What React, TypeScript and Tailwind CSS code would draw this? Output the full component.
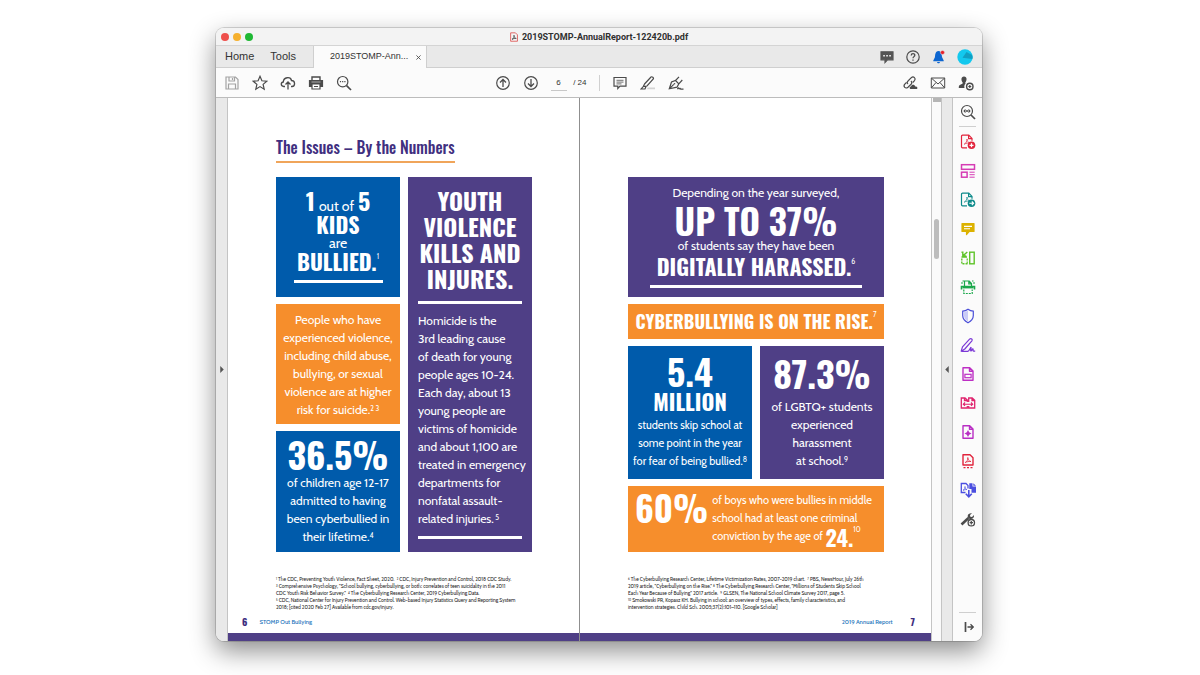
import type { ReactNode } from "react";

const display = "font-['Oswald','Roboto_Condensed','Liberation_Sans_Narrow','Liberation_Sans',sans-serif] font-bold";
const note = "whitespace-nowrap text-[5px] leading-[7px] text-[#222]";
const highSup = "-top-3 font-['Cabin',Lato,sans-serif] text-[7px] font-normal";

function Icon({ children, color = "text-[#4b4b4b]" }: { children: ReactNode; color?: string }) {
  return (
    <svg
      viewBox="0 0 16 16"
      className={`block size-4 ${color}`}
      fill="none"
      stroke="currentColor"
      strokeWidth="1.2"
      aria-hidden="true"
    >
      {children}
    </svg>
  );
}

function IconButton({ label, color, children }: { label: string; color?: string; children: ReactNode }) {
  return (
    <button type="button" aria-label={label} className="cursor-pointer">
      <Icon color={color}>{children}</Icon>
    </button>
  );
}

const swoosh = "M4.2 10.2c1.8-1 2.9-3 2.8-5.2 0 2 1.2 3.600 3 4.100-2-.3-4 .1-5.800 1.100z";

const tools = [
  {
    label: "Create PDF",
    color: "text-[#e1243c]",
    icon: (
      <>
        <path d="M7 13.800H2.500a1 1 0 0 1-1-1V2.200a1 1 0 0 1 1-1h6.300l3.200 3.200v2.400M8.600 1.400v3.200h3.200" />
        <path d={swoosh} strokeWidth=".7" />
        <circle cx="11.500" cy="11.300" r="3.800" fill="currentColor" stroke="none" />
        <path d="M11.500 9.300v4M9.500 11.300h4" stroke="#fff" strokeWidth="1.300" />
      </>
    ),
  },
  {
    label: "Organize Pages",
    color: "text-[#d63cb4]",
    icon: (
      <>
        <rect x="1.500" y="1.700" width="13" height="4.600" strokeWidth="1.500" />
        <rect x="1.500" y="9.200" width="5.600" height="5" strokeWidth="1.500" />
        <path d="M9.500 9.200h5.200M9.500 11.700h5.200M9.500 14.200h5.200" strokeWidth="1" />
      </>
    ),
  },
  {
    label: "Export PDF",
    color: "text-[#0d8a8a]",
    icon: (
      <>
        <path d="M7 13.800H2.500a1 1 0 0 1-1-1V2.200a1 1 0 0 1 1-1h6.300l3.200 3.200v2.400M8.600 1.400v3.200h3.200" />
        <path d={swoosh} strokeWidth=".7" />
        <circle cx="11.500" cy="11.300" r="3.800" fill="currentColor" stroke="none" />
        <path d="M9.300 11.300h4M11.800 9.500l1.800 1.800-1.800 1.800" stroke="#fff" strokeWidth="1.100" />
      </>
    ),
  },
  {
    label: "Comment",
    color: "text-[#dcb200]",
    icon: (
      <>
        <path d="M2 2.500h12v8H9.200L6.500 13.500v-3H2z" fill="currentColor" strokeLinejoin="round" />
        <path d="M4 5.400h8M4 7.800h6" stroke="#fff" strokeWidth="1.100" />
      </>
    ),
  },
  {
    label: "Crop Pages",
    color: "text-[#5fc42a]",
    icon: (
      <>
        <rect x="9.700" y="2.200" width="4.500" height="11.600" strokeWidth="1.400" />
        <path d="M7.500 13.800H1.800V8.500" strokeWidth="1.400" strokeDasharray="2 1" />
        <path d="M7.200 13.500V8.500" strokeDasharray="2 1" />
        <path d="M1.500 2.200h2M1.500 7H7M2.800 3v3h3.500M3 5.800L7.300 2" strokeWidth="1.400" />
      </>
    ),
  },
  {
    label: "Scan & OCR",
    color: "text-[#19a84a]",
    icon: (
      <>
        <path d="M4.500 7V2h4.700L11.500 4.500V7M8.800 2v2.800h2.700" />
        <path d="M1.500 10.500V7.500h13v3" strokeWidth="1.600" />
        <path d="M2.500 8.700h11" strokeWidth="1.400" />
        <path d="M3.800 10.500v4h8.400v-4" strokeDasharray="2 1" />
        <path d="M2 5V3M14 5V3M2.500 2h1.500M12 2h1.500" strokeWidth="1" />
      </>
    ),
  },
  {
    label: "Protect",
    color: "text-[#4b4fd8]",
    icon: (
      <>
        <path d="M8 1.300c1.700 1.200 3.500 1.800 5.300 1.900v4.300c0 3.200-2.200 5.600-5.300 7.200-3.100-1.600-5.300-4-5.300-7.200V3.200C4.500 3.100 6.300 2.500 8 1.300z" />
        <path d="M8 2.500v11C5.500 12 4 10 4 7.500V4.200C5.500 4 7 3.300 8 2.500z" fill="#c9cbf7" stroke="none" />
      </>
    ),
  },
  {
    label: "Fill & Sign",
    color: "text-[#7b38d6]",
    icon: (
      <path
        d="M1.200 14.200l1.300-4.400L9.800 1.900c1.400-1 3.100.6 2.100 2L4.800 12l-3.600 2.200zM1.500 14.400h6.200c1.800-.2 2.100-3.200 3.100-3.900.9-.3-.8 3.500.2 3.500s1-2.200 1.800-2.200-.3 2.300.8 2.300h1.600"
        strokeLinejoin="round"
      />
    ),
  },
  {
    label: "Prepare Form",
    color: "text-[#bd2fc4]",
    icon: (
      <>
        <path d="M3 1.700h6.700L13 5v9.300H3zM9.500 2v3.200h3.300" strokeWidth="1.400" strokeLinejoin="round" />
        <rect x="4.900" y="8.300" width="6.200" height="3.400" />
      </>
    ),
  },
  {
    label: "Combine Files",
    color: "text-[#e0246e]",
    icon: (
      <>
        <path d="M7.300 7V5L5 3H1.300v10h6v-2M4.500 3v2.500h2.500M8.700 7V3h3.500l2.500 2.200V13h-6v-2M12 3v2.500h2.500" strokeWidth="1.300" />
        <path d="M3.300 9.200h9.400M5 7.500L3.300 9.200 5 10.900M11 7.500l1.700 1.700L11 10.900" strokeWidth="1.100" />
      </>
    ),
  },
  {
    label: "Optimize PDF",
    color: "text-[#b92fc4]",
    icon: (
      <>
        <path d="M3 1.700h6.700L13 5v9.300H3zM9.500 2v3.200h3.300" strokeWidth="1.400" strokeLinejoin="round" />
        <path d="M8 6l1.200 2.300L11.500 9.500l-2.300 1.200L8 13l-1.200-2.300L4.500 9.500l2.300-1.200z" fill="currentColor" stroke="none" />
      </>
    ),
  },
  {
    label: "PDF Standards",
    color: "text-[#e1243c]",
    icon: (
      <>
        <path d="M3 12V1.700h7L13 4.700V12zM3 12h10" strokeWidth="1.400" strokeLinejoin="round" />
        <path d="M5.200 9.500C7 8.500 8 7 7.800 4.500 8 7 9 8.200 11 8.500c-2-.2-4 .2-5.800 1z" strokeWidth=".8" />
        <path d="M3.500 14.700h2M7 14.700h2M10.500 14.700h2" />
      </>
    ),
  },
  {
    label: "Send for Review",
    color: "text-[#4b4fe0]",
    icon: (
      <>
        <path d="M5.500 10.500H1.300V1.500H6L8 3.500v3" strokeWidth="1.300" />
        <path d="M3 8.300C4.500 7.500 5 6.500 5 4.500c0 1.500.7 2.800 2 3-1.500 0-2.700.3-4 .8z" strokeWidth=".7" />
        <path d="M9.300 1.200h3.200v3.300H16v6.300h-4.500V7H9.300z" fill="currentColor" stroke="none" />
        <path d="M13.300 1.200L16 3.700h-2.700z" fill="currentColor" stroke="none" />
        <path d="M8.800 8v6.500M5.800 11.800l3 3 3-3" strokeWidth="1.600" />
      </>
    ),
  },
  {
    label: "More Tools",
    color: "text-[#4b4b4b]",
    icon: (
      <>
        <path d="M1.500 13.500L8.500 7" strokeWidth="2.600" />
        <path d="M12 2.200L10 4l.3 1.800 1.700.3 2-2c.5 3-2.300 4.700-4.700 3.700C6.500 6 7.500 1.500 12 2.200z" fill="currentColor" stroke="none" />
        <circle cx="11.300" cy="11.700" r="3.200" fill="#fff" strokeWidth="1.300" />
        <path d="M11.300 10v3.400M9.600 11.700H13" />
      </>
    ),
  },
];

function TitleBar() {
  return (
    <header className="flex h-[17px] items-center bg-[#f3f3f3] px-[5px]">
      <div className="flex flex-1 gap-1">
        <button type="button" aria-label="Close window" className="size-2 rounded-full bg-[#ee4f4b]" />
        <button type="button" aria-label="Minimize window" className="size-2 rounded-full bg-[#f5b02e]" />
        <button type="button" aria-label="Zoom window" className="size-2 rounded-full bg-[#1fb834]" />
      </div>
      <h1 className="flex items-center gap-1 font-[Roboto,sans-serif] text-[9px] leading-3 font-bold text-[#303030]">
        <svg viewBox="0 0 10 12" className="h-[10px] w-2 text-[#dc4a48]" fill="none" stroke="currentColor" aria-hidden="true">
          <path d="M.8.800h6l2.500 2.500v8H.8z" />
          <path d="M2.500 9C4.500 8 5.200 6 5 3.800 5 6 6 7.500 7.800 7.800 6 7.500 4 8 2.500 9z" stroke="#444" />
        </svg>
        2019STOMP-AnnualReport-122420b.pdf
      </h1>
      <div className="flex-1" />
    </header>
  );
}

function TabBar() {
  return (
    <nav className="flex h-[23px] items-stretch border-t border-[#d4d4d4] bg-[#e9e9e9] text-[11px] text-[#333]">
      <div className="flex w-[98px] items-center gap-4 border-r border-b border-[#cfcfcf] pl-[9px]">
        <button type="button">Home</button>
        <button type="button">Tools</button>
      </div>
      <div className="flex items-center gap-2 bg-[#fbfbfb] pr-[5px] pl-4 text-[9px]">
        <button type="button">2019STOMP-Ann...</button>
        <button type="button" aria-label="Close tab">
          <svg viewBox="0 0 6 6" className="size-[5px]" stroke="#444" aria-hidden="true">
            <path d="M.5.500l5 5M5.500.500l-5 5" />
          </svg>
        </button>
      </div>
      <div className="flex flex-1 items-center justify-end gap-[10px] border-b border-l border-[#cfcfcf] pr-[9px]">
        <IconButton label="Messages" color="text-[#555]">
          <path d="M2 2.800h12v8H8.500L6 13.500v-2.700H2z" fill="currentColor" />
          <path d="M4.300 6.800h1.500M7.300 6.800h1.500M10.300 6.800h1.500" stroke="#fff" strokeWidth="1.500" />
        </IconButton>
        <IconButton label="Help">
          <circle cx="8" cy="8" r="6.200" />
          <path d="M6.200 6.500c.1-2.500 3.700-2.300 3.600-.2C9.800 7.600 8 7.700 8 9.300M8 10.500v1.300" strokeWidth="1.300" />
        </IconButton>
        <IconButton label="Notifications" color="text-[#0d66d0]">
          <path d="M7.500 2C4 2.300 4.300 6 3.900 8.300L2.300 11.500v.7h10.400v-.7l-1.600-3.200C10.700 6 11 2.300 7.500 2z" fill="currentColor" stroke="none" />
          <path d="M6 13h3c-.2 1.800-2.800 1.800-3 0z" fill="currentColor" stroke="none" />
          <circle cx="11.500" cy="3.500" r="2.100" fill="#e8232c" stroke="#e9e9e9" strokeWidth=".5" />
        </IconButton>
        <IconButton label="Account">
          <circle cx="8" cy="8" r="7.700" fill="#13c8ee" stroke="none" />
          <path d="M9.500 3L15 6c.8 1.500.7 3 .3 4L5.500 8.800z" fill="#119fc2" stroke="none" />
        </IconButton>
      </div>
    </nav>
  );
}

function Toolbar() {
  return (
    <div className="flex h-[30px] items-center border-b border-[#bcbcbc] bg-[#fbfbfb] px-2">
      <div className="flex flex-1 gap-3">
        <IconButton label="Save" color="text-[#a3a3a3]">
          <path d="M2 2h9.500L14 4.500V14H2zM5 2v4h5.500V2M4.500 14V9h7v5M8.500 3v2" />
        </IconButton>
        <IconButton label="Star">
          <path d="M8 1.300l1.900 4.500 4.900.4-3.700 3.200 1.100 4.800L8 11.600l-4.200 2.600 1.100-4.800L1.200 6.200l4.900-.4z" />
        </IconButton>
        <IconButton label="Upload">
          <path d="M5 11.500H3.700C.6 11.200.5 7.400 3.300 7 3.500 2 10.500 1.200 11.500 5.500c4 0 4 5.800.5 6H11M8 14.500V7.200M5.500 9.500L8 7l2.500 2.500" strokeWidth="1.300" />
        </IconButton>
        <IconButton label="Print">
          <path d="M4 5V2h8v3" strokeWidth="1.400" />
          <path d="M1.500 5.500h13v6h-2V9h-9v2.500h-2z" fill="currentColor" />
          <path d="M4 9h8v5H4zM6 11.500h4" fill="#fff" />
          <path d="M3.500 7h9" stroke="#eee" strokeWidth=".6" />
        </IconButton>
        <IconButton label="Find">
          <circle cx="6.700" cy="6.700" r="5.200" />
          <path d="M10.600 10.600L15 15" strokeWidth="1.700" />
          <path d="M3.900 6.700h1.200M6.100 6.700h1.200M8.300 6.700h1.200" strokeWidth="1.300" />
        </IconButton>
      </div>
      <div className="mr-5 flex items-center gap-3">
        <IconButton label="Previous page">
          <circle cx="8" cy="8" r="6.300" />
          <path d="M8 12V4.500M5 7.500l3-3 3 3" strokeWidth="1.300" />
        </IconButton>
        <IconButton label="Next page">
          <circle cx="8" cy="8" r="6.300" />
          <path d="M8 4v7.500M5 8.500l3 3 3-3" strokeWidth="1.300" />
        </IconButton>
        <div className="flex items-center gap-1 text-[8px] text-[#333]">
          <input
            aria-label="Page number"
            defaultValue="6"
            className="h-4 w-4 border-b border-[#c8c8c8] bg-transparent text-center"
          />
          <span className="w-4 text-right whitespace-nowrap">/ 24</span>
        </div>
        <div className="h-4 w-px bg-[#d0d0d0]" />
        <IconButton label="Add note">
          <path d="M2 2.500h12v8.700H8L5.800 13.500v-2.300H2z" />
          <path d="M4.500 5.300h7M4.500 7.100h7M4.500 8.900h5" strokeWidth=".8" />
        </IconButton>
        <IconButton label="Highlight">
          <path d="M8 12.500h7v1.700H6.500z" fill="#d3d3d3" stroke="none" />
          <path d="M4.500 9L11 2c1-.8 3 .8 2.300 2L7 11l-3.700.6zM3.300 11.600L1 14h4l1-2.500" />
        </IconButton>
        <IconButton label="Sign">
          <path d="M1.300 13.800L3.500 7l4-1.500 3.300 3.300L9 12.200zM7.500 5.500L11 1.800M10.800 8.800L14.300 5M1.500 13.600l4.300-4.300" />
          <circle cx="6.500" cy="8.800" r=".8" fill="currentColor" stroke="none" />
          <path d="M9.500 14.200c1-2.500 1.700-1 1.500 0 1-1.500 1.500-.8 1.700 0H15.500" />
        </IconButton>
      </div>
      <div className="flex flex-1 justify-end gap-3">
        <IconButton label="Share link">
          <path d="M6 9c-1.500-1.500-.5-2.700.5-3.500l2.800-2.800c2.300-2 5 .8 3.200 3L10.700 7.500M9 6c1.500 1.700.5 3-.5 3.800L6 12.200c-2.500 2-5.200-.5-3.200-3L4.500 7.500" />
          <path d="M8.300 14c-1.200-.5-.7-2.500.7-2.400.5-2.400 3.800-2.300 4.200-.2 2.600-.3 2.700 2.400 1.300 2.600z" fill="currentColor" stroke="none" />
        </IconButton>
        <IconButton label="Mail">
          <path d="M1.300 3h13.400v10H1.300zM1.500 3.200L8 9l6.500-5.800M1.500 12.800L6 7.500M14.500 12.800L10 7.500" strokeWidth="1" />
        </IconButton>
        <IconButton label="Add people">
          <path d="M6 1.500c3.400 0 3 4.300 1.300 6l.2 1.300c-1.200 1-1.500 2.700-1 4.200H.8c-.2-3 1.400-3.400 3.700-4.300l.2-1.200C3 5.800 2.700 1.500 6 1.500z" fill="currentColor" stroke="none" />
          <circle cx="11.800" cy="11.500" r="3.200" strokeWidth="1.400" />
          <path d="M11.800 10v3M10.300 11.500h3" />
        </IconButton>
      </div>
    </div>
  );
}

function LeftPage() {
  return (
    <article className="flex min-w-0 flex-1 flex-col bg-white">
      <div className="flex flex-1 flex-col pt-[38px] pr-[47px] pl-12">
        <h2 className="self-start border-b-2 border-[#f0a55a] pb-[3px] font-['Oswald','Roboto_Condensed','Liberation_Sans_Narrow',sans-serif] text-[16px] leading-[22px] font-medium whitespace-nowrap text-[#3f2f80]">
          The Issues – By the Numbers
        </h2>
        <div className="mt-[14px] grid grid-cols-2 gap-2 text-xs leading-[18px] whitespace-nowrap text-white">
          <div className="flex min-w-0 flex-col gap-[7px] text-center">
            <section className="h-[120px] bg-[#005bab] pt-[11px]">
              <p className="flex h-6 items-baseline justify-center gap-1 text-[14px] leading-6">
                <b className={`${display} text-[24px]`}>1</b> out of <b className={`${display} text-[24px]`}>5</b>
              </p>
              <p className={`${display} mb-px text-[22px] leading-6`}>KIDS</p>
              <p className="text-[14px] leading-3">are</p>
              <p className={`${display} text-[22px] leading-6`}>
                BULLIED.<sup className={highSup}>1</sup>
              </p>
              <div className="mx-auto mt-[7px] h-[3px] w-[89px] bg-white" />
            </section>
            <section className="h-[120px] bg-[#f68e2c] pt-[7px]">
              People who have<br />
              experienced violence,<br />
              including child abuse,<br />
              bullying, or sexual<br />
              violence are at higher<br />
              risk for suicide.<sup className="text-[7px]">2 3</sup>
            </section>
            <section className="h-[121px] bg-[#005bab] pt-[5px]">
              <p className={`${display} mb-[2px] text-[36px] leading-9`}>36.5%</p>
              of children age 12-17<br />
              admitted to having<br />
              been cyberbullied in<br />
              their lifetime.<sup className="text-[7px]">4</sup>
            </section>
          </div>
          <section className="flex min-w-0 flex-col bg-[#4f3f86] px-[10px] pt-[10px] pb-[13px]">
            <p className={`${display} text-center text-[24px] leading-[26px]`}>
              YOUTH<br />VIOLENCE<br />KILLS AND<br />INJURES.
            </p>
            <div className="mt-[10px] h-[3px] bg-white" />
            <p className="mt-2">
              Homicide is the<br />
              3rd leading cause<br />
              of death for young<br />
              people ages 10-24.<br />
              Each day, about 13<br />
              young people are<br />
              victims of homicide<br />
              and about 1,100 are<br />
              treated in emergency<br />
              departments for<br />
              nonfatal assault-<br />
              related injuries.<sup className="text-[7px]"> 5</sup>
            </p>
            <div className="mt-auto h-[3px] bg-white" />
          </section>
        </div>
        <p className={`${note} mt-6`}>
          <sup className="text-[3px]">1</sup> The CDC, Preventing Youth Violence, Fact Sheet, 2020. &nbsp;<sup className="text-[3px]">2</sup> CDC, Injury Prevention and Control, 2018 CDC Study.<br />
          <sup className="text-[3px]">3</sup> Comprehensive Psychology, "School bullying, cyberbullying, or both: correlates of teen suicidality in the 2011<br />
          CDC Youth Risk Behavior Survey." &nbsp;<sup className="text-[3px]">4</sup> The Cyberbullying Research Center, 2019 Cyberbullying Data.<br />
          <sup className="text-[3px]">5</sup> CDC, National Center for Injury Prevention and Control. Web-based Injury Statistics Query and Reporting System<br />
          2018; [cited 2020 Feb 27] Available from cdc.gov/injury.
        </p>
      </div>
      <footer className="flex items-center gap-3 px-[14px] pb-[6px] text-[6px] leading-[10px] font-medium text-[#1c75bc]">
        <span className={`${display} text-[10px] text-[#3f2f80]`}>6</span>
        STOMP Out Bullying
      </footer>
      <div className="h-2 bg-[#4f3f86]" />
    </article>
  );
}

function RightPage() {
  return (
    <article className="flex min-w-0 flex-1 flex-col bg-white">
      <div className="flex flex-1 flex-col pt-[79px] pr-[47px] pl-12">
        <div className="flex flex-col gap-[7px] text-center text-xs leading-[18px] whitespace-nowrap text-white">
          <section className="h-[120px] bg-[#4f3f86] px-[22px] pt-[7px]">
            <p>Depending on the year surveyed,</p>
            <p className={`${display} mb-px text-[35px] leading-9`}>UP TO 37%</p>
            <p className="leading-[14px]">of students say they have been</p>
            <p className={`${display} text-[22px] leading-[26px]`}>
              DIGITALLY HARASSED.<sup className={highSup}>6</sup>
            </p>
            <div className="mt-[6px] h-[3px] bg-white" />
          </section>
          <section className="bg-[#f68e2c]">
            <p className={`${display} text-[18px] leading-[35px]`}>
              CYBERBULLYING IS ON THE RISE.<sup className={highSup}>7</sup>
            </p>
          </section>
          <div className="grid grid-cols-2 gap-2">
            <section className="h-[133px] min-w-0 bg-[#005bab] pt-[7px] text-[11px] leading-[18px]">
              <p className={`${display} text-[36px] leading-9`}>5.4</p>
              <p className={`${display} mb-[3px] text-[22px] leading-6`}>MILLION</p>
              students skip school at<br />
              some point in the year<br />
              for fear of being bullied.<sup className="text-[7px]">8</sup>
            </section>
            <section className="h-[133px] min-w-0 bg-[#4f3f86] pt-[9px]">
              <p className={`${display} mb-[7px] text-[36px] leading-9`}>87.3%</p>
              of LGBTQ+ students<br />
              experienced<br />
              harassment<br />
              at school.<sup className="text-[7px]">9</sup>
            </section>
          </div>
          <section className="flex h-[66px] gap-1 bg-[#f68e2c] px-[7px] pt-[5px] text-left text-[11px] leading-[18px]">
            <b className={`${display} text-[35px] leading-[33px]`}>60%</b>
            <p>
              of boys who were bullies in middle<br />
              school had at least one criminal<br />
              conviction by the age of <b className={`${display} align-middle text-[22px] leading-0`}>24.</b>
              <sup className="-top-2 text-[7px]">10</sup>
            </p>
          </section>
        </div>
        <p className={`${note} mt-6`}>
          <sup className="text-[3px]">6</sup> The Cyberbullying Research Center, Lifetime Victimization Rates, 2007-2019 chart. &nbsp;<sup className="text-[3px]">7</sup> PBS, NewsHour, July 26th<br />
          2019 article, "Cyberbullying on the Rise." <sup className="text-[3px]">8</sup> The Cyberbullying Research Center, "Millions of Students Skip School<br />
          Each Year Because of Bullying" 2017 article. &nbsp;<sup className="text-[3px]">9</sup> GLSEN, The National School Climate Survey 2017, page 5.<br />
          <sup className="text-[3px]">10</sup> Smokowski PR, Kopasz KH. Bullying in school: an overview of types, effects, family characteristics, and<br />
          intervention strategies. Child Sch. 2005;37(2):101–110. [Google Scholar]
        </p>
      </div>
      <footer className="flex items-center justify-end gap-[18px] px-4 pb-[6px] text-[6px] leading-[10px] font-medium text-[#1c75bc]">
        2019 Annual Report
        <span className={`${display} text-[10px] text-[#3f2f80]`}>7</span>
      </footer>
      <div className="h-2 bg-[#4f3f86]" />
    </article>
  );
}

export default function App() {
  return (
    <div className="flex min-h-screen flex-col bg-white pt-7 pr-[218px] pb-[34px] pl-[216px] font-['Liberation_Sans',Arial,sans-serif]">
      <div className="flex flex-1 flex-col overflow-hidden rounded-lg bg-[#fbfbfb] shadow-[0_0_0_1px_rgba(0,0,0,0.15),0_10px_26px_rgba(0,0,0,0.45)]">
        <TitleBar />
        <TabBar />
        <Toolbar />
        <div className="flex flex-1">
          <button
            type="button"
            aria-label="Show navigation pane"
            className="flex w-3 shrink-0 items-center justify-center border-r border-[#c4c4c4] bg-[#e9e9e9]"
          >
            <svg viewBox="0 0 4 8" className="h-[7px] w-1" fill="#555" aria-hidden="true">
              <path d="M0 0l4 4-4 4z" />
            </svg>
          </button>
          <main className="flex min-w-0 flex-1 font-['Cabin',Lato,sans-serif]">
            <LeftPage />
            <div className="w-px shrink-0 bg-[#8f8f8f]" />
            <RightPage />
          </main>
          <div className="flex w-[10px] shrink-0 flex-col items-center border-l border-[#c4c4c4] bg-[#fafafa]">
            <div className="h-1 w-2 bg-[#b5b5b5]" />
            <div className="mt-[117px] h-10 w-[5px] rounded-full bg-[#bdbdbd]" />
          </div>
          <button
            type="button"
            aria-label="Hide tools pane"
            className="flex w-3 shrink-0 items-center justify-center border-x border-[#c4c4c4] bg-[#e9e9e9]"
          >
            <svg viewBox="0 0 4 8" className="h-[7px] w-1" fill="#555" aria-hidden="true">
              <path d="M4 0L0 4l4 4z" />
            </svg>
          </button>
          <aside className="flex w-[29px] shrink-0 flex-col items-center bg-[#fbfbfb] py-[6px]">
            <IconButton label="Search tools">
              <circle cx="7" cy="7" r="5.500" />
              <path d="M11 11l4 4" strokeWidth="1.700" />
              <path d="M5.500 4.800L3.300 7l2.200 2.200zM8.500 4.800L10.700 7 8.500 9.200z" fill="currentColor" stroke="none" />
              <circle cx="7" cy="7" r="1" fill="currentColor" stroke="none" />
            </IconButton>
            <div className="mt-[6px] mb-[7px] h-px w-[17px] bg-[#cfcfcf]" />
            <div className="flex flex-col gap-[13px]">
              {tools.map((tool) => (
                <IconButton key={tool.label} label={tool.label} color={tool.color}>
                  {tool.icon}
                </IconButton>
              ))}
            </div>
            <div className="mt-auto mb-[6px] h-px w-[17px] bg-[#cfcfcf]" />
            <IconButton label="Collapse tools">
              <path d="M5.500 3v10" strokeWidth="1.700" />
              <path d="M7.500 8h5.500M10.500 5.200L13.300 8l-2.800 2.800" strokeWidth="1.300" />
            </IconButton>
          </aside>
        </div>
      </div>
    </div>
  );
}
